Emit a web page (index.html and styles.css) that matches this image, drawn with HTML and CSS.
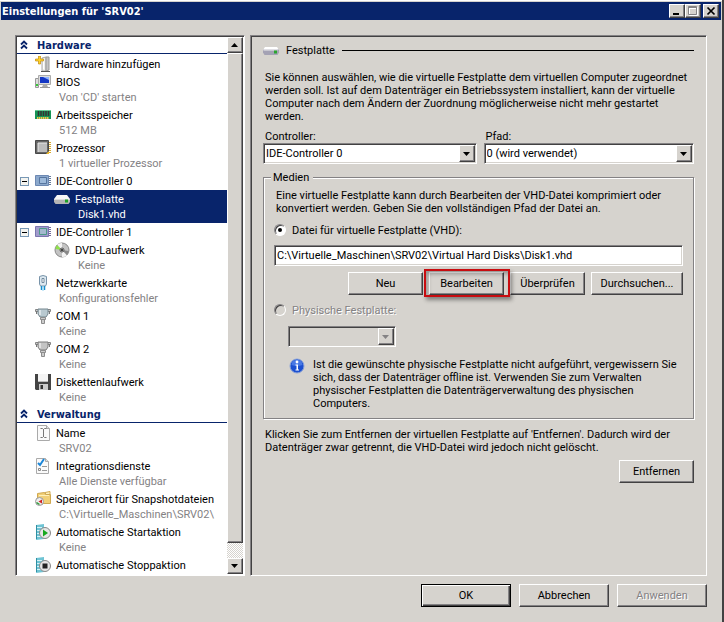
FILE: index.html
```html
<!DOCTYPE html>
<html lang="de">
<head>
  <meta charset="UTF-8">
  <meta name="viewport" content="width=device-width, initial-scale=1.0">
  <title>Einstellungen für 'SRV02'</title>
  <link rel="stylesheet" href="styles.css">
</head>
<body>
<div class="window">

  <!-- Title Bar -->
  <header class="title-bar">
    <h1>Einstellungen für 'SRV02'</h1>
    <div class="window-buttons">
      <button type="button" aria-label="Minimieren">
        <svg width="12" height="10" viewBox="0 0 12 10"><path d="M2 7h6v2H2z" fill="#000"/></svg>
      </button>
      <button type="button" aria-label="Maximieren" disabled>
        <svg width="12" height="10" viewBox="0 0 12 10"><path d="M2.500 1.500h8v8h-8zM2 2.500h9" fill="none" stroke="#fff"/><path d="M1.500 .5h8v8h-8zM1 1.500h9" fill="none" stroke="#848284"/></svg>
      </button>
      <button type="button" class="close" aria-label="Schließen">
        <svg width="12" height="10" viewBox="0 0 12 10"><path d="M2.500 1.500l7 7M9.500 1.500l-7 7" fill="none" stroke="#000" stroke-width="1.700"/></svg>
      </button>
    </div>
  </header>

  <main class="main">

    <!-- Settings List -->
    <nav class="sidebar">
      <div class="tree">
        <h2 class="group">
          <svg width="8" height="10" viewBox="0 0 8 10"><path d="M1 4.500l3-3 3 3M1 8.500l3-3 3 3" fill="none" stroke="#08246b" stroke-width="1.800"/></svg>
          Hardware
        </h2>
        <ul>
          <li class="item">
            <svg class="icon" viewBox="0 0 16 16"><path d="M7 2l4-1v14H7z" fill="#eeeeea" stroke="#aaa"/><path d="M11 1h3v13l-3 1z" fill="#c4c4c4" stroke="#999"/><path d="M8.500 4v9" stroke="#fff"/><path d="M6 15.500h9" stroke="#555"/><path d="M3.500 0h2v3h3v2h-3v3h-2V5h-3V3h3z" fill="#ffd42a" stroke="#c08a10" stroke-width=".7"/></svg>
            <span class="name">Hardware hinzufügen</span>
          </li>
          <li class="item">
            <svg class="icon" viewBox="0 0 16 16"><path d="M.5 4.500h3v9h-3z" fill="#ddd" stroke="#999"/><path d="M1 10h2v2H1z" fill="#37c837"/><path d="M3.500 1.500h12v9h-12z" fill="#ddd" stroke="#aaa"/><path d="M5 3h9v6H5z" fill="#1437c4"/><path d="M8 3h6v3z" fill="#8fb4ff"/><path d="M8 11h4l1 2H7z" fill="#aaa"/><path d="M5 13.500h10" stroke="#999"/></svg>
            <span class="name">BIOS</span>
            <span class="value">Von 'CD' starten</span>
          </li>
          <li class="item">
            <svg class="icon" viewBox="0 0 16 16"><path d="M0 3h16v9H0z" fill="#159456"/><path d="M0 3.500h16" stroke="#65c895"/><path d="M3.500 4v5M6 4v5M8.500 4v5M11 4v5M13.500 4v5" stroke="#333" stroke-width="1.500"/><path d="M2 11h12" stroke="#eec64a" stroke-width="2" stroke-dasharray="1.500 .5"/></svg>
            <span class="name">Arbeitsspeicher</span>
            <span class="value">512 MB</span>
          </li>
          <li class="item">
            <svg class="icon" viewBox="0 0 16 16"><path d="M15 2v12" stroke="#d9a82b" stroke-width="2" stroke-dasharray="1 1"/><path d="M.5 .5h13v13H.5z" fill="#666" stroke="#484848"/><path d="M3 3h9v9H3z" fill="#bcbcbc"/><path d="M3 12V3h9" fill="none" stroke="#e8e8e8"/><path d="M11 14h3v-3z" fill="#f0bb2c"/></svg>
            <span class="name">Prozessor</span>
            <span class="value">1 virtueller Prozessor</span>
          </li>
          <li class="item">
            <button type="button" class="toggle" aria-label="IDE-Controller 0 reduzieren"></button>
            <svg class="icon" viewBox="0 0 16 16"><path d="M1 3v10M15 3v10" stroke="#64799a" stroke-width="2" stroke-dasharray="1 1"/><path d="M.5 2.500h13v10H.5z" fill="#8ba8cc" stroke="#6c88b2"/><path d="M4.500 4.500h7v6h-7z" fill="#9cb9da" stroke="#56759f"/></svg>
            <span class="name">IDE-Controller 0</span>
          </li>
          <li class="item child selected">
            <svg class="icon" viewBox="0 0 16 16"><path d="M3 4h10l3 4H0z" fill="#f6f6f6"/><path d="M0 8h16v3l-1.500 2h-13L0 11z" fill="#b5b5b5"/><path d="M0 8.500h16" stroke="#ddd"/><path d="M11 8.500h3v3h-3z" fill="#1da326"/></svg>
            <span class="name">Festplatte</span>
            <span class="value">Disk1.vhd</span>
          </li>
          <li class="item">
            <button type="button" class="toggle" aria-label="IDE-Controller 1 reduzieren"></button>
            <svg class="icon" viewBox="0 0 16 16"><path d="M1 3v10M15 3v10" stroke="#716c9a" stroke-width="2" stroke-dasharray="1 1"/><path d="M.5 2.500h13v10H.5z" fill="#a09bcc" stroke="#7a76ae"/><path d="M4.500 4.500h7v6h-7z" fill="#a4b8cf" stroke="#4d9a88"/></svg>
            <span class="name">IDE-Controller 1</span>
          </li>
          <li class="item child">
            <svg class="icon" viewBox="0 0 16 16"><circle cx="8" cy="8" r="7" fill="#c3c3c3" stroke="#888"/><path d="M8 8L3 2.500A7 7 0 0 1 8 1zM8 8l5 5.500A7 7 0 0 1 8 15z" fill="#f2f2f2"/><path d="M8 8L1.500 7A7 7 0 0 1 3 3z" fill="#8fe04a"/><path d="M8 8l6.500 1a7 7 0 0 1-1.500 4z" fill="#888"/><circle cx="8" cy="8" r="2" fill="#ddd" stroke="#555"/><circle cx="8" cy="8" r="1" fill="#111"/></svg>
            <span class="name">DVD-Laufwerk</span>
            <span class="value">Keine</span>
          </li>
          <li class="item">
            <svg class="icon" viewBox="0 0 16 16"><path d="M4.500 1.500q3.500-2 7 0V9l-1 2h-5l-1-2z" fill="#dce8f0" stroke="#7893a9"/><path d="M7 3.500h2v4H7z" fill="#fff" stroke="#58758c" stroke-width=".8"/><path d="M6.500 11v4M9.500 11v4" stroke="#168dcc" stroke-width="1.500"/><path d="M8 11v5" stroke="#8fd1f0"/></svg>
            <span class="name">Netzwerkkarte</span>
            <span class="value">Konfigurationsfehler</span>
          </li>
          <li class="item">
            <svg class="icon" viewBox="0 0 16 16"><path d="M.5 1.500h15v2H.5z" fill="#ccc" stroke="#858585"/><path d="M3 1h10v5l-2 3H5L3 6z" fill="#b9c9d0" stroke="#75868e"/><path d="M5 2v5" stroke="#fff"/><path d="M5.500 9.500h5v2h-5zM6.500 11.500h3v4h-3z" fill="#ccc" stroke="#8d8d8d"/><path d="M1.500 3v3M14.500 3v3" stroke="#777"/></svg>
            <span class="name">COM 1</span>
            <span class="value">Keine</span>
          </li>
          <li class="item">
            <svg class="icon" viewBox="0 0 16 16"><path d="M.5 1.500h15v2H.5z" fill="#ccc" stroke="#858585"/><path d="M3 1h10v5l-2 3H5L3 6z" fill="#c4c4c4" stroke="#7d7d7d"/><path d="M5 2v5" stroke="#fff"/><path d="M5.500 9.500h5v2h-5zM6.500 11.500h3v4h-3z" fill="#ccc" stroke="#8d8d8d"/><path d="M1.500 3v3M14.500 3v3" stroke="#777"/></svg>
            <span class="name">COM 2</span>
            <span class="value">Keine</span>
          </li>
          <li class="item">
            <svg class="icon" viewBox="0 0 16 16"><path d="M0 0h16v16H1l-1-1z" fill="#444"/><path d="M3 0h10v8H3z" fill="#f4f4f4"/><path d="M3 7.500h10" stroke="#bbb"/><path d="M4 10h9v6H4z" fill="#ccc"/><path d="M5.500 11h2.500v4H5.500z" fill="#333"/></svg>
            <span class="name">Diskettenlaufwerk</span>
            <span class="value">Keine</span>
          </li>
        </ul>

        <h2 class="group">
          <svg width="8" height="10" viewBox="0 0 8 10"><path d="M1 4.500l3-3 3 3M1 8.500l3-3 3 3" fill="none" stroke="#08246b" stroke-width="1.800"/></svg>
          Verwaltung
        </h2>
        <ul>
          <li class="item">
            <svg class="icon" viewBox="0 0 16 16"><path d="M2.500 .5h9l3 3v12h-12z" fill="#fafafa" stroke="#aaa"/><path d="M11.500 .5v3h3" fill="#ddd" stroke="#aaa"/><path d="M5.500 3.500h2l1 1 1-1h2M8.500 4v8M5.500 12.500h2l1-1 1 1h2" fill="none" stroke="#777"/></svg>
            <span class="name">Name</span>
            <span class="value">SRV02</span>
          </li>
          <li class="item">
            <svg class="icon" viewBox="0 0 16 16"><path d="M1.500 .5h9l3 3v12h-12z" fill="#fafafa" stroke="#aaa"/><path d="M10.500 .5v3h3" fill="#ddd" stroke="#aaa"/><path d="M3 5l2 2 4-6" fill="none" stroke="#1b86d8" stroke-width="2"/><path d="M3.500 10.500h2v2h-2z" fill="#fff" stroke="#888"/><path d="M7 8.500h5M7 12.500h5" stroke="#999"/></svg>
            <span class="name">Integrationsdienste</span>
            <span class="value">Alle Dienste verfügbar</span>
          </li>
          <li class="item">
            <svg class="icon" viewBox="0 0 16 16"><path d="M2.500 2.500l7-1 1 2h5v9h-13z" fill="#f1cf77" stroke="#d0a850"/><path d="M10 1.500l5-1v3h-4z" fill="#fff0b8" stroke="#d0a850"/><path d="M4 4.500h10" stroke="#fff0b8"/><circle cx="4.500" cy="10.500" r="4" fill="#eee" stroke="#999"/><path d="M7 8.500v4L3.500 10.500z" fill="#d32222"/><path d="M1.500 11.500l3 2" stroke="#2c9a38" stroke-width="1.500"/></svg>
            <span class="name">Speicherort für Snapshotdateien</span>
            <span class="value">C:\Virtuelle_Maschinen\SRV02\</span>
          </li>
          <li class="item">
            <svg class="icon" viewBox="0 0 16 16"><path d="M1 1l8-1v15l-8 1z" fill="#6fc4d4"/><path d="M2 3.500h5M2 6.500h5M2 9.500h5M2 12.500h5" stroke="#d7f3f7"/><path d="M1.500 1v14" stroke="#2f8fa3"/><circle cx="10" cy="9" r="5.500" fill="#e6e6e6" stroke="#888"/><path d="M8 5.500v7L13 9z" fill="#17a81e"/></svg>
            <span class="name">Automatische Startaktion</span>
            <span class="value">Keine</span>
          </li>
          <li class="item">
            <svg class="icon" viewBox="0 0 16 16"><path d="M1 1l8-1v15l-8 1z" fill="#6fc4d4"/><path d="M2 3.500h5M2 6.500h5M2 9.500h5M2 12.500h5" stroke="#d7f3f7"/><path d="M1.500 1v14" stroke="#2f8fa3"/><circle cx="10" cy="9" r="5.500" fill="#e6e6e6" stroke="#888"/><path d="M7.500 6.500h5v5h-5z" fill="#222"/></svg>
            <span class="name">Automatische Stoppaktion</span>
          </li>
        </ul>
      </div>
      <div class="scrollbar">
        <button type="button" aria-label="Nach oben"><svg width="8" height="4" viewBox="0 0 8 4"><path d="M0 4l3.500-4L7 4z"/></svg></button>
        <div class="thumb"></div>
        <div class="track"></div>
        <button type="button" aria-label="Nach unten"><svg width="8" height="4" viewBox="0 0 8 4"><path d="M0 0h7L3.500 4z"/></svg></button>
      </div>
    </nav>

    <!-- Hard Disk Page -->
    <section class="page">
      <h2 class="page-title">
        <svg width="16" height="8" viewBox="0 0 16 8"><path d="M2 0h12l2 3H0z" fill="#fff"/><path d="M0 2.500h16v3L14.500 8h-13L0 5.500z" fill="#a4a2b4"/><path d="M.5 3h14" stroke="#eee"/><path d="M11 3.500h3v3h-3z" fill="#2aa52f"/></svg>
        <span>Festplatte</span>
      </h2>
      <p class="intro">Sie können auswählen, wie die virtuelle Festplatte dem virtuellen Computer zugeordnet<br>
        werden soll. Ist auf dem Datenträger ein Betriebssystem installiert, kann der virtuelle<br>
        Computer nach dem Ändern der Zuordnung möglicherweise nicht mehr gestartet<br>
        werden.</p>

      <div class="fields">
        <div class="field">
          <label for="controller">Controller:</label>
          <div class="select">
            <select id="controller"><option>IDE-Controller 0</option></select>
            <span class="arrow"><svg width="8" height="4" viewBox="0 0 8 4"><path d="M0 0h7L3.500 4z"/></svg></span>
          </div>
        </div>
        <div class="field">
          <label for="path">Pfad:</label>
          <div class="select">
            <select id="path"><option>0 (wird verwendet)</option></select>
            <span class="arrow"><svg width="8" height="4" viewBox="0 0 8 4"><path d="M0 0h7L3.500 4z"/></svg></span>
          </div>
        </div>
      </div>

      <fieldset class="media">
        <legend>Medien</legend>
        <p>Eine virtuelle Festplatte kann durch Bearbeiten der VHD-Datei komprimiert oder<br>
          konvertiert werden. Geben Sie den vollständigen Pfad der Datei an.</p>
        <div class="radio">
          <input type="radio" name="medium" id="vhd" checked>
          <label for="vhd">Datei für virtuelle Festplatte (VHD):</label>
        </div>
        <input type="text" class="file" aria-label="Pfad der VHD-Datei" value="C:\Virtuelle_Maschinen\SRV02\Virtual Hard Disks\Disk1.vhd">
        <div class="actions">
          <button type="button" class="btn">Neu</button>
          <div class="marked"><button type="button" class="btn">Bearbeiten</button></div>
          <button type="button" class="btn">Überprüfen</button>
          <button type="button" class="btn browse">Durchsuchen...</button>
        </div>
        <div class="radio disabled">
          <input type="radio" name="medium" id="physical" disabled>
          <label for="physical">Physische Festplatte:</label>
        </div>
        <div class="select disabled">
          <select aria-label="Physische Festplatte" disabled><option></option></select>
          <span class="arrow"><svg width="8" height="4" viewBox="0 0 8 4"><path d="M0 0h7L3.500 4z"/></svg></span>
        </div>
        <div class="info">
          <svg width="16" height="16" viewBox="0 0 16 16"><circle cx="8" cy="8" r="7" fill="#1c50d0" stroke="#8aa2d8"/><path d="M2.500 7a5.500 5.500 0 0 1 11 0q-5.500 2-11 0z" fill="#4878e4"/><circle cx="8" cy="4" r="1.400" fill="#fff"/><path d="M6.500 6.500H9v5h1v1H6.500v-1h1v-4h-1z" fill="#fff"/></svg>
          <p>Ist die gewünschte physische Festplatte nicht aufgeführt, vergewissern Sie<br>
            sich, dass der Datenträger offline ist. Verwenden Sie zum Verwalten<br>
            physischer Festplatten die Datenträgerverwaltung des physischen<br>
            Computers.</p>
        </div>
      </fieldset>

      <p class="remove-text">Klicken Sie zum Entfernen der virtuellen Festplatte auf 'Entfernen'. Dadurch wird der<br>
        Datenträger zwar getrennt, die VHD-Datei wird jedoch nicht gelöscht.</p>
      <div class="remove"><button type="button" class="btn">Entfernen</button></div>
    </section>
  </main>

  <!-- Dialog Buttons -->
  <footer class="footer">
    <button type="submit" class="btn default">OK</button>
    <button type="button" class="btn">Abbrechen</button>
    <button type="button" class="btn" disabled>Anwenden</button>
  </footer>
</div>
</body>
</html>
```
FILE: styles.css
```css
/* General Styles */
* {
  box-sizing: border-box;
}
body {
  margin: 0;
  background-color: #d6d3ce;
  color: #000;
  font-family: Roboto, "Liberation Sans", sans-serif;
  font-size: 11px;
  line-height: 13px;
}
h1, h2, p, ul {
  margin: 0;
  padding: 0;
  list-style: none;
  font-size: 11px;
}
button, input, select {
  font: inherit;
  color: inherit;
}
svg {
  display: block;
  flex: none;
}
.window {
  display: flex;
  flex-direction: column;
  min-height: 100vh;
  padding: 2px 1px 0;
  border-right: 2px solid #424142;
  box-shadow: inset 0 1px 0 #fff;
}

/* Title Bar */
.title-bar {
  display: flex;
  align-items: center;
  justify-content: space-between;
  height: 18px;
  padding: 0 2px 0 1px;
  background-color: #08246b;
  color: #fff;
}
.title-bar h1 {
  font-family: "DejaVu Sans Condensed", "DejaVu Sans", sans-serif;
}
.window-buttons {
  display: flex;
}
.window-buttons button {
  width: 16px;
  height: 14px;
  padding: 0 0 0 1px;
}
.window-buttons .close {
  margin-left: 2px;
}

/* Raised 3D Buttons */
.btn,
.window-buttons button,
.scrollbar button,
.thumb,
.arrow {
  background-color: #d6d3ce;
  border: 1px solid;
  border-color: #fff #424142 #424142 #fff;
  border-radius: 0;
  box-shadow: inset -1px -1px 0 #848284;
}
.btn {
  width: 75px;
  height: 23px;
  padding: 0;
  text-align: center;
}
.btn:disabled {
  color: #848284;
  text-shadow: 1px 1px 0 #fff;
}
.btn.default {
  border-color: #000;
  box-shadow: inset 1px 1px 0 #fff, inset -1px -1px 0 #424142, inset -2px -2px 0 #848284;
}

/* Main Area */
.main {
  display: flex;
  flex: 1;
  gap: 5px;
  padding: 15px 14px 0;
}
.sidebar,
.page {
  border: 1px solid;
  border-color: #848284 #fff #fff #848284;
  box-shadow: inset 1px 1px 0 #424142;
}

/* Settings List */
.sidebar {
  display: flex;
  flex: none;
  width: 230px;
  padding: 1px;
  background-color: #fff;
}
.tree {
  flex: 1;
  white-space: nowrap;
  overflow: hidden;
}
.group {
  display: flex;
  align-items: center;
  gap: 9px;
  height: 17px;
  padding-left: 3px;
  margin-bottom: 1px;
  border-bottom: 1px solid #08246b;
  color: #08246b;
  font-family: "DejaVu Sans Condensed", "DejaVu Sans", sans-serif;
}
.item {
  display: grid;
  grid-template-columns: 14px 16px 1fr;
  grid-template-rows: 18px;
  grid-auto-rows: 15px;
  align-items: center;
  column-gap: 4px;
}
.item .icon {
  grid-column: 2;
  width: 16px;
  height: 16px;
}
.item .name,
.item .value {
  grid-column: 3;
  padding-left: 1px;
}
.item .value {
  padding: 0 0 2px 4px;
  color: #848284;
}
.item.child {
  padding-left: 19px;
}
.item.selected {
  background-color: #08246b;
}
.item.selected .name,
.item.selected .value {
  color: #fff;
}
.toggle {
  grid-column: 1;
  position: relative;
  width: 9px;
  height: 9px;
  padding: 0;
  margin-left: 3px;
  background-color: #f4f4f0;
  border: 1px solid #7898b5;
}
.toggle::after {
  content: "";
  position: absolute;
  top: 3px;
  left: 1px;
  width: 5px;
  height: 1px;
  background-color: #000;
}

/* Scrollbar */
.scrollbar {
  display: flex;
  flex-direction: column;
  flex: none;
  width: 16px;
}
.scrollbar button {
  display: flex;
  align-items: center;
  justify-content: center;
  height: 16px;
  padding: 0;
}
.thumb {
  flex: 97;
}
.track {
  flex: 3;
  background: repeating-conic-gradient(#fff 0 25%, #d6d3ce 0 50%) 0 0 / 2px 2px;
}

/* Hard Disk Page */
.page {
  flex: 1;
  padding: 8px 12px 0;
}
.page-title {
  display: flex;
  align-items: center;
  gap: 7px;
  font-weight: normal;
}
.page-title::after {
  content: "";
  flex: 1;
  height: 1px;
  background-color: #000;
}
.intro {
  padding: 14px 0 7px 2px;
  white-space: nowrap;
}
.fields {
  display: flex;
  gap: 7px;
}
.field {
  flex: 213;
}
.field + .field {
  flex: 210;
}
.field label {
  display: block;
  padding-left: 2px;
}

/* Inputs */
.select {
  position: relative;
}
.select select,
.file {
  display: block;
  width: 100%;
  height: 21px;
  padding: 0 2px;
  background-color: #fff;
  border: 1px solid;
  border-color: #848284 #fff #fff #848284;
  border-radius: 0;
  box-shadow: inset 1px 1px 0 #424142, inset -1px -1px 0 #d6d3ce;
  appearance: none;
  outline: none;
}
.arrow {
  position: absolute;
  top: 2px;
  right: 2px;
  display: flex;
  align-items: center;
  justify-content: center;
  width: 16px;
  height: 17px;
  pointer-events: none;
}
.select.disabled {
  width: 108px;
  margin: 7px 0 0 14px;
}
.select.disabled select {
  background-color: #d6d3ce;
  opacity: 1;
}
.select.disabled .arrow {
  fill: #848284;
}

/* Media Group */
.media {
  margin: 7px 0 0;
  padding: 5px 10px 8px;
  border: 1px solid #848284;
  box-shadow: 1px 1px 0 #fff, inset 1px 1px 0 #fff;
  white-space: nowrap;
}
.media legend {
  margin-left: -3px;
  padding: 0 4px 0 2px;
  background-color: #d6d3ce;
}
.media > p {
  padding-left: 2px;
}
.radio {
  display: flex;
  align-items: center;
  gap: 6px;
  height: 18px;
  margin-top: 6px;
}
.radio input {
  position: relative;
  width: 12px;
  height: 12px;
  margin: 0;
  background-color: #fff;
  border: 1px solid;
  border-color: #848284 #fff #fff #848284;
  border-radius: 50%;
  box-shadow: inset 1px 1px 0 #424142;
  appearance: none;
}
.radio input:checked::after {
  content: "";
  position: absolute;
  top: 3px;
  left: 3px;
  width: 4px;
  height: 4px;
  border-radius: 50%;
  background-color: #000;
}
.radio.disabled {
  color: #848284;
  text-shadow: 1px 1px 0 #fff;
}
.radio.disabled input {
  background-color: #d6d3ce;
}
.file {
  margin-top: 6px;
}
.actions {
  display: flex;
  justify-content: flex-end;
  gap: 6px;
  margin-top: 6px;
}
.marked {
  position: relative;
}
.marked::after {
  content: "";
  position: absolute;
  inset: -3px -6px -2px -5px;
  border: 2px solid #c80c10;
  box-shadow: 2px 3px 4px rgba(0, 0, 0, 0.4), inset 2px 3px 4px rgba(0, 0, 0, 0.3);
  pointer-events: none;
}
.actions .browse {
  width: 92px;
}
.info {
  display: flex;
  gap: 8px;
  padding: 11px 0 0 15px;
}

/* Remove Section */
.remove-text {
  padding: 9px 0 6px 2px;
  white-space: nowrap;
}
.remove {
  display: flex;
  justify-content: flex-end;
}

/* Dialog Buttons */
.footer {
  display: flex;
  justify-content: flex-end;
  gap: 8px;
  padding: 8px 14px 15px;
}
.footer .btn {
  width: 90px;
}
```
